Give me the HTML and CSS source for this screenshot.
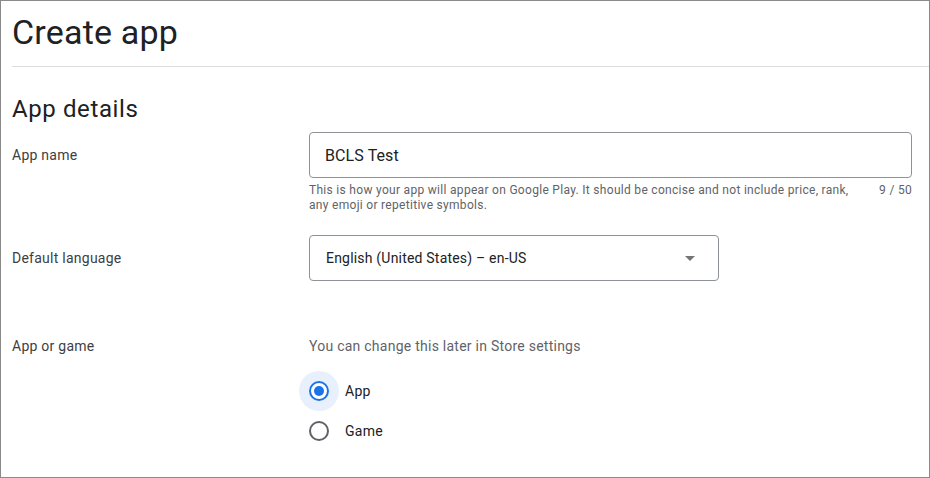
FILE: index.html
```html
<!DOCTYPE html>
<html lang="en">
<head>
<meta charset="utf-8">
<title>Create app</title>
<link rel="stylesheet" href="styles.css">
</head>
<body>
<div class="frame">
  <header class="page-header">
    <h1 class="page-title">Create app</h1>
  </header>
  <main class="content">
    <h2 class="section-title">App details</h2>

    <div class="row row-name">
      <div class="label">App name</div>
      <div class="field">
        <div class="text-input">BCLS Test</div>
        <div class="hint">
          <span class="hint-text">This is how your app will appear on Google Play. It should be concise and not include price, rank, any emoji or repetitive symbols.</span>
          <span class="counter">9 / 50</span>
        </div>
      </div>
    </div>

    <div class="row row-lang">
      <div class="label">Default language</div>
      <div class="field">
        <div class="select">
          <span class="select-value">English (United States) – en-US</span>
          <span class="select-arrow"></span>
        </div>
      </div>
    </div>

    <div class="row row-type">
      <div class="label">App or game</div>
      <div class="field">
        <div class="helper">You can change this later in Store settings</div>
        <div class="radios">
          <div class="radio-row">
            <span class="radio checked"></span>
            <span class="radio-label">App</span>
          </div>
          <div class="radio-row">
            <span class="radio"></span>
            <span class="radio-label">Game</span>
          </div>
        </div>
      </div>
    </div>
  </main>
</div>
</body>
</html>
```
FILE: styles.css
```css
html, body {
  margin: 0;
  padding: 0;
  background: #ffffff;
}

.frame {
  box-sizing: border-box;
  width: 930px;
  height: 478px;
  border: 1px solid #8a8a8a;
  overflow: hidden;
  font-family: Roboto, "Liberation Sans", Arial, sans-serif;
  color: #3c4043;
}

.page-header {
  margin-left: 11px;
  height: 66px;
  border-bottom: 1px solid #dadce0;
  box-sizing: border-box;
  padding-top: 11px;
}

.page-title {
  margin: 0;
  font-size: 34px;
  line-height: 40px;
  font-weight: 400;
  color: #202124;
  letter-spacing: 0.2px;
}

.content {
  padding: 0 17px 0 11px;
}

.section-title {
  margin: 26px 0 7px;
  font-size: 24px;
  line-height: 32px;
  font-weight: 400;
  color: #202124;
  letter-spacing: 0.6px;
}

.row {
  display: grid;
  grid-template-columns: 297px 1fr;
}

.label {
  font-size: 14px;
  line-height: 20px;
  letter-spacing: 0.25px;
  color: #3c4043;
}

.row-name .label,
.row-lang .label {
  padding-top: 13px;
}

.text-input {
  box-sizing: border-box;
  height: 46px;
  border: 1px solid #8f9397;
  border-radius: 4px;
  padding: 0 15px;
  display: flex;
  align-items: center;
  font-size: 16px;
  letter-spacing: 0.1px;
  color: #202124;
}

.hint {
  display: flex;
  gap: 24px;
  margin-top: 5px;
  font-size: 12px;
  line-height: 15px;
  letter-spacing: 0.3px;
  color: #5f6368;
}

.hint-text {
  flex: 1;
}

.counter {
  white-space: nowrap;
}

.row-lang {
  margin-top: 22px;
}

.select {
  box-sizing: border-box;
  width: 410px;
  height: 46px;
  border: 1px solid #8f9397;
  border-radius: 4px;
  padding: 0 23px 0 16px;
  display: flex;
  align-items: center;
  justify-content: space-between;
  font-size: 14px;
  letter-spacing: 0.2px;
  color: #202124;
}

.select-arrow {
  width: 0;
  height: 0;
  border-left: 5px solid transparent;
  border-right: 5px solid transparent;
  border-top: 5px solid #757575;
}

.row-type {
  margin-top: 55px;
}

.helper {
  font-size: 14px;
  line-height: 20px;
  letter-spacing: 0.25px;
  color: #5f6368;
}

.radios {
  margin-top: 15px;
}

.radio-row {
  height: 40px;
  display: flex;
  align-items: center;
  gap: 16px;
}

.radio {
  position: relative;
  box-sizing: border-box;
  width: 20px;
  height: 20px;
  border: 2px solid #5f6368;
  border-radius: 50%;
  flex: none;
}

.radio.checked {
  border-color: #1a73e8;
  box-shadow: 0 0 0 10px #e8f0fe;
}

.radio.checked::after {
  content: "";
  position: absolute;
  left: 3px;
  top: 3px;
  width: 10px;
  height: 10px;
  border-radius: 50%;
  background: #1a73e8;
}

.radio-label {
  font-size: 14px;
  letter-spacing: 0.25px;
  color: #202124;
}
```
